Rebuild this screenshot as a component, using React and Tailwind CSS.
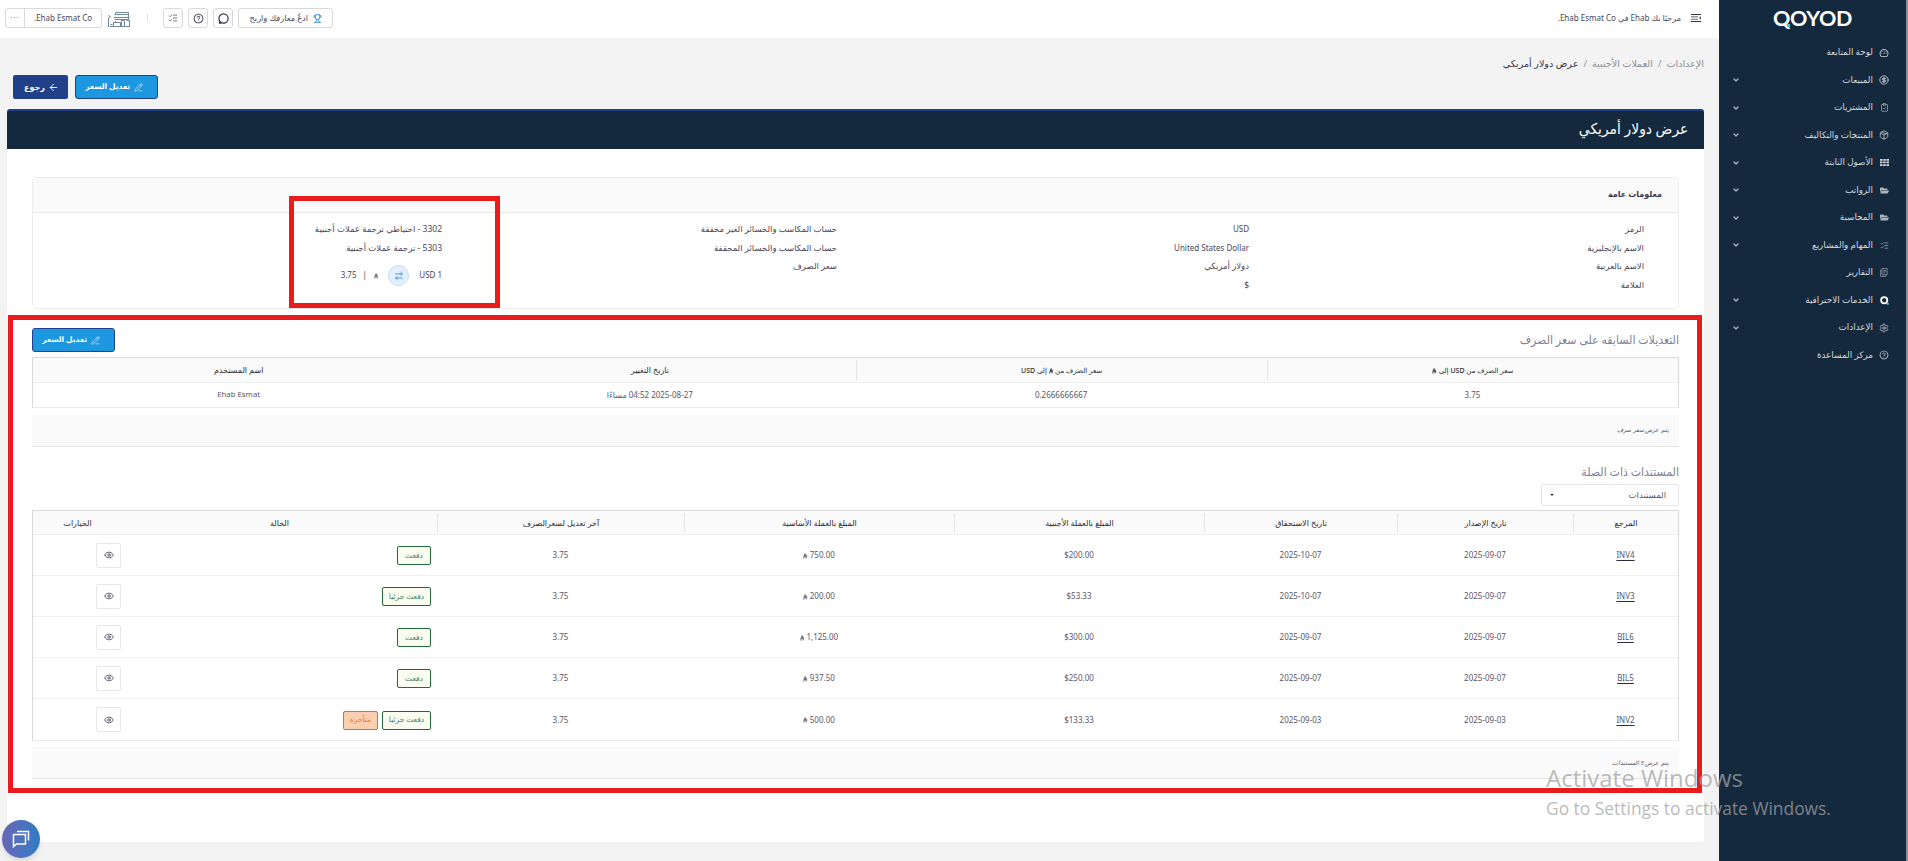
import React from "react";
import {
    CircleDollarSign,
    ClipboardCheck,
    Package,
    ListChecks,
    Settings,
    ChevronDown,
    Trophy,
    ArrowLeft,
    PencilLine,
    ArrowRightLeft,
    Eye,
} from "lucide-react";
import { FaFolderOpen } from "react-icons/fa";
import { AiOutlineQuestionCircle, AiOutlineDashboard } from "react-icons/ai";

const menu = [
    { label: "لوحة المتابعة", icon: <AiOutlineDashboard size={10} /> },
    { label: "المبيعات", icon: <CircleDollarSign size={10} strokeWidth={2} />, sub: true },
    { label: "المشتريات", icon: <ClipboardCheck size={9} strokeWidth={1.5} />, sub: true },
    { label: "المنتجات والتكاليف", icon: <Package size={10} strokeWidth={1.7} />, sub: true },
    { label: "الأصول الثابتة", icon: <GridIcon />, sub: true },
    { label: "الرواتب", icon: <FaFolderOpen size={9} className="text-[#aab3ba]" />, sub: true },
    { label: "المحاسبة", icon: <FaFolderOpen size={9} className="text-[#aab3ba]" />, sub: true },
    { label: "المهام والمشاريع", icon: <ListChecks size={9} strokeWidth={1.5} />, sub: true },
    { label: "التقارير", icon: <ReportIcon /> },
    { label: "الخدمات الاحترافية", icon: <QMark />, sub: true },
    { label: "الإعدادات", icon: <Settings size={10} strokeWidth={1.6} />, sub: true },
    { label: "مركز المساعدة", icon: <AiOutlineQuestionCircle size={10} /> },
];

const documents = [
    { ref: "INV4", issued: "2025-09-07", due: "2025-10-07", foreign: "$200.00", base: "750.00", status: ["paid"] },
    { ref: "INV3", issued: "2025-09-07", due: "2025-10-07", foreign: "$53.33", base: "200.00", status: ["partial"] },
    { ref: "BIL6", issued: "2025-09-07", due: "2025-09-07", foreign: "$300.00", base: "1,125.00", status: ["paid"] },
    { ref: "BIL5", issued: "2025-09-07", due: "2025-09-07", foreign: "$250.00", base: "937.50", status: ["paid"] },
    { ref: "INV2", issued: "2025-09-03", due: "2025-09-03", foreign: "$133.33", base: "500.00", status: ["partial", "late"] },
];

const badges = {
    paid: { text: "دفعت", cls: "w-[34px] border-[#1f6b3a] bg-[#fafcf0] text-[#3f8562]" },
    partial: { text: "دفعت جزئيا", cls: "w-[49px] border-[#1f6b3a] bg-[#fafcf0] text-[#3f8562]" },
    late: { text: "متأخرة", cls: "w-[35px] border-[#ee6c0c] bg-[#f9cfb2] text-[#ee7a2c]" },
};

const docHeads = [
    "المرجع",
    "تاريخ الإصدار",
    "تاريخ الاستحقاق",
    "المبلغ بالعملة الأجنبية",
    "المبلغ بالعملة الأساسية",
    "آخر تعديل لسعرالصرف",
    "الحالة",
    "الخيارات",
];

const docGrid = "grid grid-cols-[105px_176px_193px_250px_270px_247px_315px_1fr]";

function GridIcon() {
    return (
        <svg width="9" height="7" viewBox="0 0 9 7" fill="#d5dade">
            <path d="M0 0h2.500v1.700H0zM3.200 0h2.500v1.700H3.200zM6.400 0H9v1.700H6.400zM0 2.600h2.500v1.700H0zM3.200 2.600h2.500v1.700H3.200zM6.400 2.600H9v1.700H6.400zM0 5.200h2.500v1.700H0zM3.200 5.200h2.500v1.700H3.200zM6.400 5.200H9v1.700H6.400z" />
        </svg>
    );
}

function ReportIcon() {
    return (
        <svg width="8" height="9" viewBox="0 0 8 9" fill="none" stroke="#9aa5ae" strokeWidth="0.700">
            <path d="M2 0.500h5.200v6.300H2zM2 2H0.600v6.400h5.200V6.800M3.300 2.400h2.600M3.300 3.800h2.600M3.300 5.200h1.600" />
        </svg>
    );
}

function QMark() {
    return (
        <svg width="9" height="9" viewBox="0 0 9 9" fill="none">
            <circle cx="4.200" cy="4.200" r="3.100" stroke="#fff" strokeWidth="1.800" />
            <rect x="6.800" y="6.800" width="2" height="2" fill="#35c8ee" />
        </svg>
    );
}

function Riyal() {
    return (
        <svg className="inline-block shrink-0" width="4.500" height="6" viewBox="0 0 10 12" fill="none" stroke="currentColor" strokeWidth="1.600">
            <path d="M3.400 0.800V8.200L0.600 8.900M5.800 0v9.200M0.600 6.400L9.400 4.400M5.800 7.600L9.400 6.800M5.800 10.400L9.400 9.600M0.600 11.200L3.400 10.200" />
        </svg>
    );
}

function Store() {
    return (
        <svg width="22" height="16" viewBox="0 0 22 16" fill="none" stroke="#71889e" strokeWidth="1">
            <path d="M7.500 0.500h13M6.500 2.500h14M5.500 5.500h16M6.500 7.500h14M7.500 0.500v2M20.500 0.500v7M0.500 6v9M0.500 3.500l2 1-2 1.500" />
            <path d="M2 14.500h20M5.500 14v-3.500h7v4M7.500 9v1.500M13.500 14V8.500h3V14M18.500 8.500h3V14M4.500 12.500h-2" />
        </svg>
    );
}

function MenuIcon() {
    return (
        <svg width="10" height="8" viewBox="0 0 10 8" stroke="#3a3747" fill="none">
            <path d="M0 0.500h10M0 7.500h10" />
            <path d="M0 2.800h7M0 5.200h7" stroke="#6d6a78" />
            <path d="M9.800 2.300v3.400L8 4z" fill="#3a3747" stroke="none" />
        </svg>
    );
}

function IconBox({ children }) {
    return (
        <span className="w-5 h-5 border border-[#d9d9d9] rounded-[3px] flex items-center justify-center text-[#35324a]">
            {children}
        </span>
    );
}

function EditButton() {
    return (
        <button className="w-[83px] h-6 rounded-[3px] border border-[#22408a] bg-[#1c97e0] text-white flex items-center pr-[14px] gap-[4px] text-[7.5px] font-bold whitespace-nowrap">
            <PencilLine size={9} strokeWidth={1.5} />
            تعديل السعر
        </button>
    );
}

function Sidebar() {
    return (
        <aside className="w-[189px] shrink-0 bg-[#14293d] border-r-2 border-[#8b8b8b] text-[#d5dade]">
            <div className="h-[39px] pr-[54px] pt-[6px]">
                <div dir="ltr" className="relative w-[79px] h-6 flex items-center text-white text-[21.5px] font-bold tracking-[-0.3px] font-['Lato',sans-serif]">
                    QOYOD
                    <span className="absolute left-[14px] top-[18px] w-[3px] h-[3px] bg-[#35c8ee]" />
                </div>
            </div>
            <ul>
                {menu.map((m) => (
                    <li key={m.label} className="h-[27.5px] flex items-center pr-[17px] pl-[13px] text-[8.8px] whitespace-nowrap">
                        <span className="w-[10px] flex justify-center">{m.icon}</span>
                        <span className="mr-[6px] flex-1">{m.label}</span>
                        {m.sub && <ChevronDown size={8} strokeWidth={4} className="text-[#a9b3bb]" />}
                    </li>
                ))}
            </ul>
        </aside>
    );
}

function Topbar() {
    return (
        <header className="h-[38px] bg-white flex items-center justify-between pr-[18px] pl-[5px] pb-[2px] text-[8px] text-[#4a4759] whitespace-nowrap">
            <div className="flex items-center gap-[10px]">
                <MenuIcon />
                <span>مرحبًا بك Ehab في Ehab Esmat Co.</span>
            </div>
            <div className="flex items-center">
                <span className="w-[95px] h-5 border border-[#d9d9d9] rounded-[3px] flex items-center pr-[10px] gap-[5px]">
                    <Trophy size={9} className="text-[#2e92ee]" strokeWidth={2.6} />
                    <span className="text-[8.2px]">ادعُ معارفك واربح</span>
                </span>
                <div className="flex gap-[5px] mr-[5px]">
                    <IconBox>
                        <svg width="11" height="11" viewBox="0 0 11 11" fill="none" stroke="currentColor" strokeWidth="1.200">
                            <circle cx="5.500" cy="5.500" r="4.600" />
                            <path d="M1.500 8.500v1.600h1.600" />
                        </svg>
                    </IconBox>
                    <IconBox><AiOutlineQuestionCircle size={11} /></IconBox>
                    <IconBox><ListChecks size={10} strokeWidth={1.6} /></IconBox>
                </div>
                <span className="w-px h-2 bg-[#e2e2e2] mr-[15px] ml-[17px]" />
                <span className="mt-[3px]"><Store /></span>
                <div className="mr-[6px] w-[97px] h-5 border border-[#d9d9d9] rounded-[3px] flex items-center">
                    <span className="flex-1 text-center">Ehab Esmat Co.</span>
                    <span className="w-[19px] h-full border-r border-[#d9d9d9] flex items-center justify-center text-[#8d8d8d] tracking-[1px]">···</span>
                </div>
            </div>
        </header>
    );
}

function GeneralInfo() {
    return (
        <section className="h-[132px] border border-[#ececec] rounded-[5px]">
            <h3 className="h-[35px] bg-[#fafafa] border-b border-[#e8e8e8] rounded-t-[5px] flex items-center pr-4 pb-[2px] text-[8px] font-bold text-[#3a3850]">
                معلومات عامة
            </h3>
            <div className="grid grid-cols-[395px_412px_395px_1fr] pr-[34px] pt-[7px] text-[8.5px] leading-[18.6px] text-[#4a4759] whitespace-nowrap">
                <div>
                    <p>الرمز</p>
                    <p>الاسم بالإنجليزية</p>
                    <p>الاسم بالعربية</p>
                    <p>العلامة</p>
                </div>
                <div>
                    <p className="text-[8px]">USD</p>
                    <p className="text-[8px]">United States Dollar</p>
                    <p>دولار أمريكي</p>
                    <p>$</p>
                </div>
                <div>
                    <p>حساب المكاسب والخسائر الغير محققة</p>
                    <p>حساب المكاسب والخسائر المحققة</p>
                    <p>سعر الصرف</p>
                </div>
                <div>
                    <p>3302 - احتياطي ترجمة عملات أجنبية</p>
                    <p>5303 - ترجمة عملات أجنبية</p>
                    <div className="flex items-center mt-[8px] h-[21px] text-[8px]">
                        <span>1</span>
                        <span className="mr-[2px] w-[26px]">USD</span>
                        <span className="w-[21px] h-[21px] rounded-full border border-[#c5dcf8] bg-[#e3effd] flex items-center justify-center text-[#2e88ee]">
                            <ArrowRightLeft size={10} />
                        </span>
                        <span className="mr-[10px] text-[#6b5560] flex"><Riyal /></span>
                        <span className="mr-[7px] ml-[6px]">|</span>
                        <span>3.75</span>
                    </div>
                </div>
            </div>
        </section>
    );
}

function HeadCell({ children, line }) {
    return (
        <div className={"h-5 my-auto flex items-center justify-center " + (line ? "border-l border-[#e4e4e4]" : "")}>
            <span>{children}</span>
        </div>
    );
}

function RateHistory() {
    return (
        <section className="mt-[19px]">
            <div className="flex justify-between items-center h-6">
                <h2 className="text-[12.2px] scale-x-90 origin-right text-[#7d7f9b]">التعديلات السابقه على سعر الصرف</h2>
                <EditButton />
            </div>
            <div className="mt-[5px] border border-[#d9d9d9] border-b-[#ebebeb] text-[8px] whitespace-nowrap">
                <div className="grid grid-cols-4 h-[25px] bg-[#fafafa] border-b border-[#f0f0f0] text-[#2c2a33] font-medium">
                    <HeadCell line><span className="text-[7px]">سعر الصرف من USD إلى <Riyal /></span></HeadCell>
                    <HeadCell line><span className="text-[7px]">سعر الصرف من <Riyal /> إلى USD</span></HeadCell>
                    <HeadCell>تاريخ التغيير</HeadCell>
                    <HeadCell>اسم المستخدم</HeadCell>
                </div>
                <div className="grid grid-cols-4 h-6 items-center text-center text-[#5a5768]">
                    <span>3.75</span>
                    <span>0.2666666667</span>
                    <span className="flex justify-center gap-[2px]">
                        <bdi dir="ltr">2025-08-27</bdi> <bdi dir="ltr">04:52</bdi> <span>مساءًا</span>
                    </span>
                    <span className="text-[7.8px]">Ehab Esmat</span>
                </div>
            </div>
            <p className="mt-[7px] h-8 bg-[#fafafa] border-b border-[#e6e6e6] flex items-center pr-[10px] text-[6px] italic text-[#5a5768]">
                يتم عرض سعر صرف
            </p>
        </section>
    );
}

function RelatedDocuments() {
    return (
        <section className="pt-[13px]">
            <h2 className="h-6 flex items-center text-[12.2px] scale-x-90 origin-right text-[#7d7f9b]">المستندات ذات الصلة</h2>
            <div className="w-[138px] h-[22px] border border-[#e6e6e6] rounded-[2px] flex items-center justify-between pr-3 pl-2 text-[8.5px] text-[#5a5768]">
                المستندات
                <span className="w-1 border-x-2 border-t-2 border-x-transparent border-t-[#333]" />
            </div>
            <div className="mt-[4px] border border-[#d9d9d9] border-b-[#ebebeb] text-[8px] whitespace-nowrap">
                <div className={docGrid + " h-6 bg-[#fafafa] border-b border-[#f0f0f0] text-[#2c2a33] font-medium"}>
                    {docHeads.map((h, i) => (
                        <HeadCell key={h} line={i < 6}>{h}</HeadCell>
                    ))}
                </div>
                {documents.map((d, i) => (
                    <div
                        key={d.ref}
                        className={docGrid + " h-[41px] items-center text-center text-[#5a5768] " + (i < 4 ? "border-b border-[#f0f0f0]" : "")}
                    >
                        <a className="underline decoration-[#2c2a44] underline-offset-2">{d.ref}</a>
                        <span dir="ltr">{d.issued}</span>
                        <span dir="ltr">{d.due}</span>
                        <span dir="ltr">{d.foreign}</span>
                        <span dir="ltr"><Riyal /> {d.base}</span>
                        <span>3.75</span>
                        <span className="flex gap-1 pr-[6px] pt-px">
                            {d.status.map((s) => (
                                <span key={s} className={"h-[19px] border rounded-[2px] flex items-center justify-center text-[7.5px] " + badges[s].cls}>
                                    {badges[s].text}
                                </span>
                            ))}
                        </span>
                        <span className="flex">
                            <span className="mr-px w-[25px] h-[25px] border border-[#e8e8e8] rounded-[2px] flex items-center justify-center text-[#4a4759]">
                                <Eye size={10} />
                            </span>
                        </span>
                    </div>
                ))}
            </div>
            <p className="mt-[6px] h-8 bg-[#fafafa] border-b border-[#e6e6e6] flex items-center pr-[10px] text-[6px] leading-none italic text-[#5a5768]">
                يتم عرض 5 المستندات
            </p>
        </section>
    );
}

export default function App() {
    return (
        <div dir="rtl" className="relative w-[1908px] h-[861px] overflow-hidden flex bg-[#f3f3f3] font-['Noto_Sans','DejaVu_Sans',sans-serif]">
            <Sidebar />
            <div className="flex-1 flex flex-col">
                <Topbar />
                <main className="pr-[15px] pl-[7px]">
                    <nav className="h-[37px] pt-[19px] flex items-start gap-[5px] text-[9.6px] text-[#8f8f95] whitespace-nowrap">
                        <span>الإعدادات</span>
                        <span>/</span>
                        <span>العملات الأجنبية</span>
                        <span>/</span>
                        <span className="text-[#35324a]">عرض دولار أمريكي</span>
                    </nav>
                    <div className="flex justify-end gap-[7px] pl-[6px]">
                        <EditButton />
                        <button className="w-[55px] h-6 rounded-[2px] bg-[#22408a] text-white flex items-center justify-end pl-[11px] gap-[3px] text-[8px] font-bold">
                            <ArrowLeft size={11} />
                            رجوع
                        </button>
                    </div>
                    <div className="mt-[10px] h-[733px] bg-white rounded-[4px]">
                        <h1 className="h-10 bg-[#14293d] border-t-2 border-[#22408a] rounded-t-[3px] flex items-center pr-4 pb-[3px] text-[15px] text-white">
                            <span className="scale-x-[0.925] origin-right">عرض دولار أمريكي</span>
                        </h1>
                        <div className="pt-7 pr-[25px] pl-[25px]">
                            <GeneralInfo />
                            <RateHistory />
                            <RelatedDocuments />
                        </div>
                    </div>
                </main>
            </div>

            {/* highlight frames */}
            <div className="absolute left-[289px] top-[196px] w-[211px] h-[112px] border-[5px] border-[#e81c1c]" />
            <div className="absolute left-[8px] top-[315px] w-[1694px] h-[478px] border-[5px] border-[#e81c1c]" />

            {/* chat launcher */}
            <div className="absolute left-[2px] top-[820px] w-[38px] h-[38px] rounded-full bg-linear-to-r from-[#6665b8] to-[#2a7cc4] shadow-md flex items-center justify-center">
                <svg width="18" height="18" viewBox="0 0 18 18" fill="none" stroke="#fff" strokeWidth="1.500">
                    <path d="M1.500 4.500h12v9.500H4.500L1.500 16.500z" />
                    <path d="M5 1.500h11.500v9" />
                </svg>
            </div>

            <div dir="ltr" className="absolute left-[1546px] top-[766px] text-[#a3a3a3]/75 font-['Open_Sans',sans-serif] whitespace-nowrap">
                <p className="text-[24px] leading-6">Activate Windows</p>
                <p className="mt-[4px] text-[17.4px] leading-7">Go to Settings to activate Windows.</p>
            </div>
        </div>
    );
}
